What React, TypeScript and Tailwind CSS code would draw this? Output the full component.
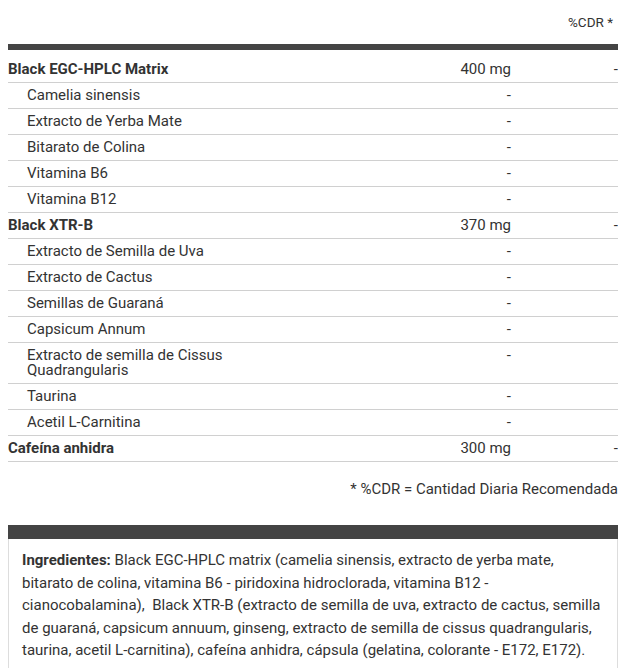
import React from "react";

type Row = { name: string; amount: string; cdr: string; bold?: boolean };

const rows: Row[] = [
  { name: "Black EGC-HPLC Matrix", amount: "400 mg", cdr: "-", bold: true },
  { name: "Camelia sinensis", amount: "-", cdr: "" },
  { name: "Extracto de Yerba Mate", amount: "-", cdr: "" },
  { name: "Bitarato de Colina", amount: "-", cdr: "" },
  { name: "Vitamina B6", amount: "-", cdr: "" },
  { name: "Vitamina B12", amount: "-", cdr: "" },
  { name: "Black XTR-B", amount: "370 mg", cdr: "-", bold: true },
  { name: "Extracto de Semilla de Uva", amount: "-", cdr: "" },
  { name: "Extracto de Cactus", amount: "-", cdr: "" },
  { name: "Semillas de Guaraná", amount: "-", cdr: "" },
  { name: "Capsicum Annum", amount: "-", cdr: "" },
  { name: "Extracto de semilla de Cissus Quadrangularis", amount: "-", cdr: "" },
  { name: "Taurina", amount: "-", cdr: "" },
  { name: "Acetil L-Carnitina", amount: "-", cdr: "" },
  { name: "Cafeína anhidra", amount: "300 mg", cdr: "-", bold: true },
];

export default function App() {
  return (
    <div
      className="w-[618px] overflow-hidden bg-white text-[15px] text-[#333]"
      style={{ fontFamily: "Roboto, 'Liberation Sans', sans-serif" }}
    >
      <div className="ml-2 w-[610px]">
        <div className="flex h-[44px] items-center justify-end pr-[5px] text-[13.5px] leading-[15px]">%CDR *</div>
        <div className="h-[6px] bg-[#444]" />
        <div className="mt-[7px]">
          {rows.map((r, i) => (
            <div key={i} className="flex border-b border-[#d0d0d0] py-[5px] leading-[15px]">
              <div className={r.bold ? "w-[240px] font-bold" : "w-[240px] pl-[19px]"}>{r.name}</div>
              <div className="w-[263px] text-right">{r.amount}</div>
              <div className="flex-1 text-right">{r.cdr}</div>
            </div>
          ))}
        </div>
        <div className="mt-[20px] text-right leading-[15px]">* %CDR = Cantidad Diaria Recomendada</div>
        <div className="mt-[28px] h-[14px] bg-[#444]" />
        <div className="border-l border-r border-[#ddd] pl-[13px] pr-[14px] pt-[10px] pb-4 leading-[22.6px]">
          <span className="font-bold">Ingredientes:</span> Black EGC-HPLC matrix (camelia sinensis, extracto de yerba mate, bitarato de colina, vitamina B6 - piridoxina hidroclorada, vitamina B12 - cianocobalamina),&nbsp; Black XTR-B (extracto de semilla de uva, extracto de cactus, semilla de guaraná, capsicum annuum, ginseng, extracto de semilla de cissus quadrangularis, taurina, acetil L-carnitina), cafeína anhidra, cápsula (gelatina, colorante - E172, E172).
        </div>
      </div>
    </div>
  );
}
